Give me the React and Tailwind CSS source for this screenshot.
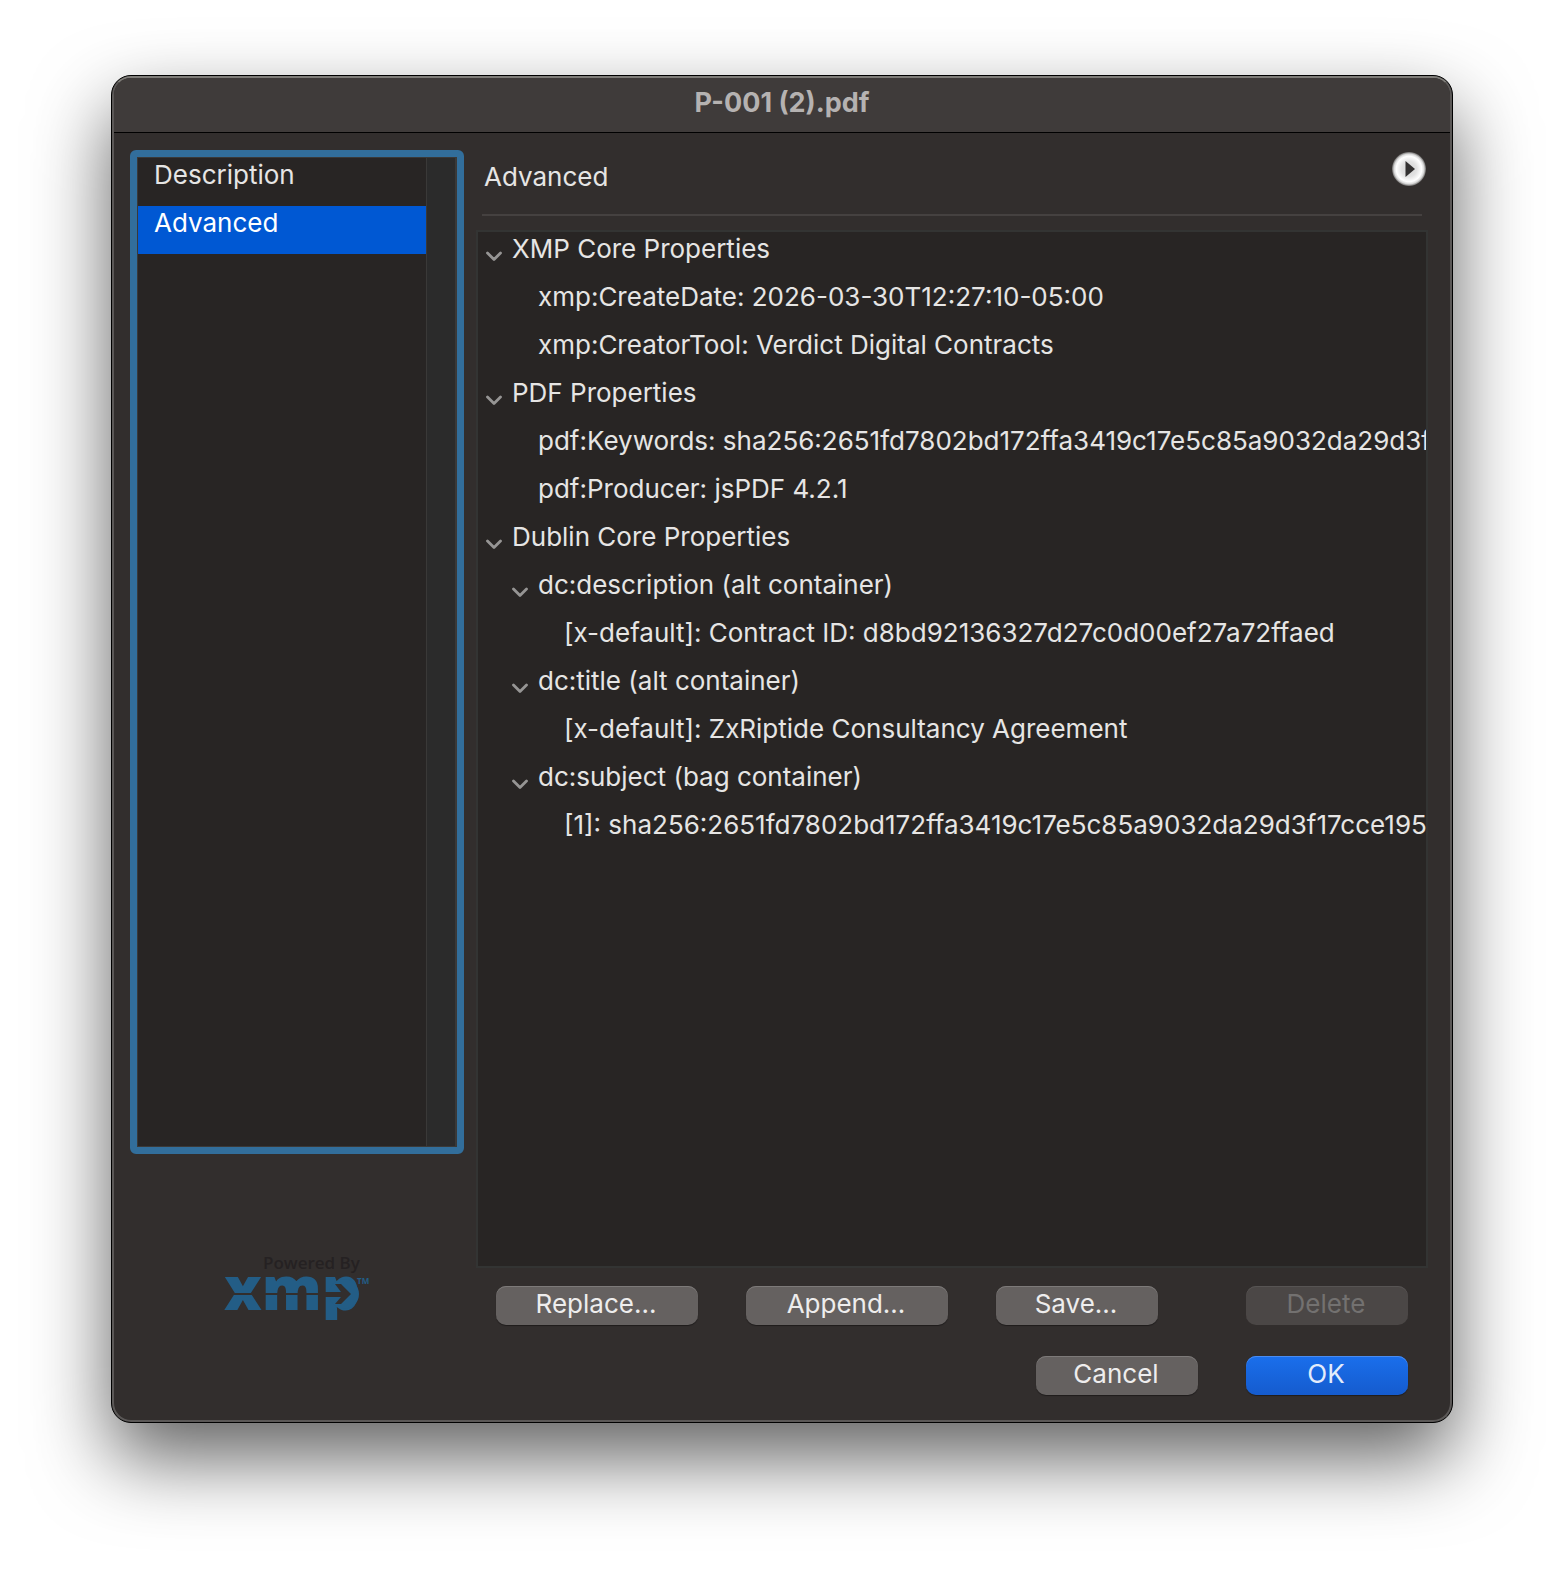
import React from "react";

const rows = [
  { label: "XMP Core Properties", level: 0, open: true },
  { label: "xmp:CreateDate: 2026-03-30T12:27:10-05:00", level: 1 },
  { label: "xmp:CreatorTool: Verdict Digital Contracts", level: 1 },
  { label: "PDF Properties", level: 0, open: true },
  { label: "pdf:Keywords: sha256:2651fd7802bd172ffa3419c17e5c85a9032da29d3f17cce195", level: 1 },
  { label: "pdf:Producer: jsPDF 4.2.1", level: 1 },
  { label: "Dublin Core Properties", level: 0, open: true },
  { label: "dc:description (alt container)", level: 1, open: true },
  { label: "[x-default]: Contract ID: d8bd92136327d27c0d00ef27a72ffaed", level: 2 },
  { label: "dc:title (alt container)", level: 1, open: true },
  { label: "[x-default]: ZxRiptide Consultancy Agreement", level: 2 },
  { label: "dc:subject (bag container)", level: 1, open: true },
  { label: "[1]: sha256:2651fd7802bd172ffa3419c17e5c85a9032da29d3f17cce195", level: 2 },
];

const indent = ["pl-2", "pl-[34px]", "pl-[60px]"];

function Chevron() {
  return (
    <svg width="16" height="12" viewBox="0 0 16 12" aria-hidden="true">
      <path d="M1.5 3 L8 9.5 L14.5 3" fill="none" stroke="#969594" strokeWidth="2.8" strokeLinecap="round" strokeLinejoin="round" />
    </svg>
  );
}

function TreeRow({ label, level, open }) {
  return (
    <li className={`flex h-12 leading-[34px] whitespace-nowrap ${indent[level]}`}>
      <div className="flex h-12 w-[26px] shrink-0 items-center">
        {open && (
          <button type="button" aria-label={`Collapse ${label}`}>
            <Chevron />
          </button>
        )}
      </div>
      <span>{label}</span>
    </li>
  );
}

function PushButton({ children, wide, primary, disabled, className = "" }) {
  const tone = primary
    ? "bg-gradient-to-b from-[#1a6fec] to-[#155bce] text-[#e3ecfb] shadow-[inset_0_1px_0_#4a8cf0,0_1px_1px_rgba(0,0,0,0.4)]"
    : disabled
      ? "bg-[#4b4746] text-[#737170] shadow-[inset_0_1px_0_#575453]"
      : "bg-[#656160] text-[#eeeded] shadow-[inset_0_1px_0_#7d7a79,0_1px_1px_rgba(0,0,0,0.4)]";
  return (
    <button
      type="button"
      disabled={disabled}
      className={`h-[39px] rounded-[10px] pr-0.5 pb-[3px] leading-8 ${wide ? "w-[202px]" : "w-[162px]"} ${tone} ${className}`}
    >
      {children}
    </button>
  );
}

function XmpLogo() {
  return (
    <svg width="148" height="80" viewBox="0 0 148 80" role="img" aria-label="Powered by XMP" className="overflow-visible font-['Open_Sans',sans-serif]">
      <text x="40" y="17" fontSize="17" fontWeight="600" fill="#252122">Powered By</text>
      <text x="1" y="58" fontSize="60" fontWeight="800" fill="#235d86">xmp</text>
      <circle cx="121" cy="42" r="15" fill="#235d86" />
      <path d="M0 41 H101 V43 H0 Z" fill="#322e2d" />
      <path d="M96 40 H118 L112 32 H118 L128 42 L118 52 H112 L118 45 H96 Z" fill="#322e2d" />
      <path d="M96 68 H120 V80 H96 Z" fill="#322e2d" />
      <text x="134" y="32" fontSize="8" fontWeight="700" fill="#235d86">TM</text>
    </svg>
  );
}

export default function App() {
  return (
    <div className="flex min-h-screen overflow-hidden bg-white px-[111px] pt-[75px] pb-[147px] font-['Inter',sans-serif] text-[26px] text-[#e6e5e4]">
      <div className="flex min-w-0 flex-1 rounded-[20px] border border-black bg-black shadow-[0_35px_78px_rgba(0,0,0,0.62)]">
        <main className="flex min-w-0 flex-1 flex-col overflow-hidden rounded-[19px] border-2 border-[#5b5857] border-t-[#7f7d79] bg-[#322e2d]">
          <header className="flex h-[55px] items-center justify-center border-b border-black bg-[#3f3b3a]">
            <h1 className="pb-1 text-[27px] leading-8 font-bold text-[#b5b2b1]">P-001 (2).pdf</h1>
          </header>
          <div className="flex flex-1 gap-3 pt-[17px] pr-[22px] pl-4">
            <aside className="flex w-[334px] shrink-0 flex-col">
              <div className="flex flex-1 rounded-md border-[7px] border-[#326e9b] bg-[#282524]">
                <nav className="flex-1 border border-[#3a3938]" aria-label="Sections">
                  <button type="button" className="block h-12 w-full pb-3.5 pl-4 text-left leading-8">Description</button>
                  <button type="button" aria-current="page" className="block h-12 w-full bg-[#0058d3] pb-3.5 pl-4 text-left leading-8 text-white">Advanced</button>
                </nav>
                <div className="w-[30px] border-y border-r-2 border-[#3a3938] bg-[#2b2b2b]" />
              </div>
              <div className="flex justify-center pt-[98px] pb-[88px]">
                <XmpLogo />
              </div>
            </aside>
            <section className="flex min-w-0 flex-1 flex-col">
              <div className="mr-1.5 ml-1.5 flex h-[66px] items-start justify-between border-b-2 border-[#454140] pl-0.5">
                <h2 className="pt-[11px] leading-8">Advanced</h2>
                <button type="button" aria-label="Open menu" className="-mr-1 mt-0.5">
                  <svg width="34" height="34" viewBox="0 0 34 34" aria-hidden="true">
                    <defs>
                      <radialGradient id="knob">
                        <stop offset="0" stopColor="#d4d4d4" />
                        <stop offset="0.45" stopColor="#e2e2e2" />
                        <stop offset="0.75" stopColor="#ffffff" />
                        <stop offset="0.88" stopColor="#d8d8d8" />
                        <stop offset="1" stopColor="#6c6a69" />
                      </radialGradient>
                    </defs>
                    <circle cx="17" cy="17" r="17" fill="url(#knob)" />
                    <path d="M13.5 9 L23 17 L13.5 25 Z" fill="#333131" />
                  </svg>
                </button>
              </div>
              <ul className="mt-3.5 flex-1 overflow-hidden border-2 border-[#333433] bg-[#282524]">
                {rows.map((row) => (
                  <TreeRow key={row.label} {...row} />
                ))}
              </ul>
              <div className="flex gap-12 pt-[18px] pr-5 pl-5">
                <PushButton wide>Replace...</PushButton>
                <PushButton wide>Append...</PushButton>
                <PushButton>Save...</PushButton>
                <PushButton disabled className="ml-auto">Delete</PushButton>
              </div>
              <div className="flex justify-end gap-12 pt-[31px] pr-5 pb-[25px]">
                <PushButton>Cancel</PushButton>
                <PushButton primary>OK</PushButton>
              </div>
            </section>
          </div>
        </main>
      </div>
    </div>
  );
}
